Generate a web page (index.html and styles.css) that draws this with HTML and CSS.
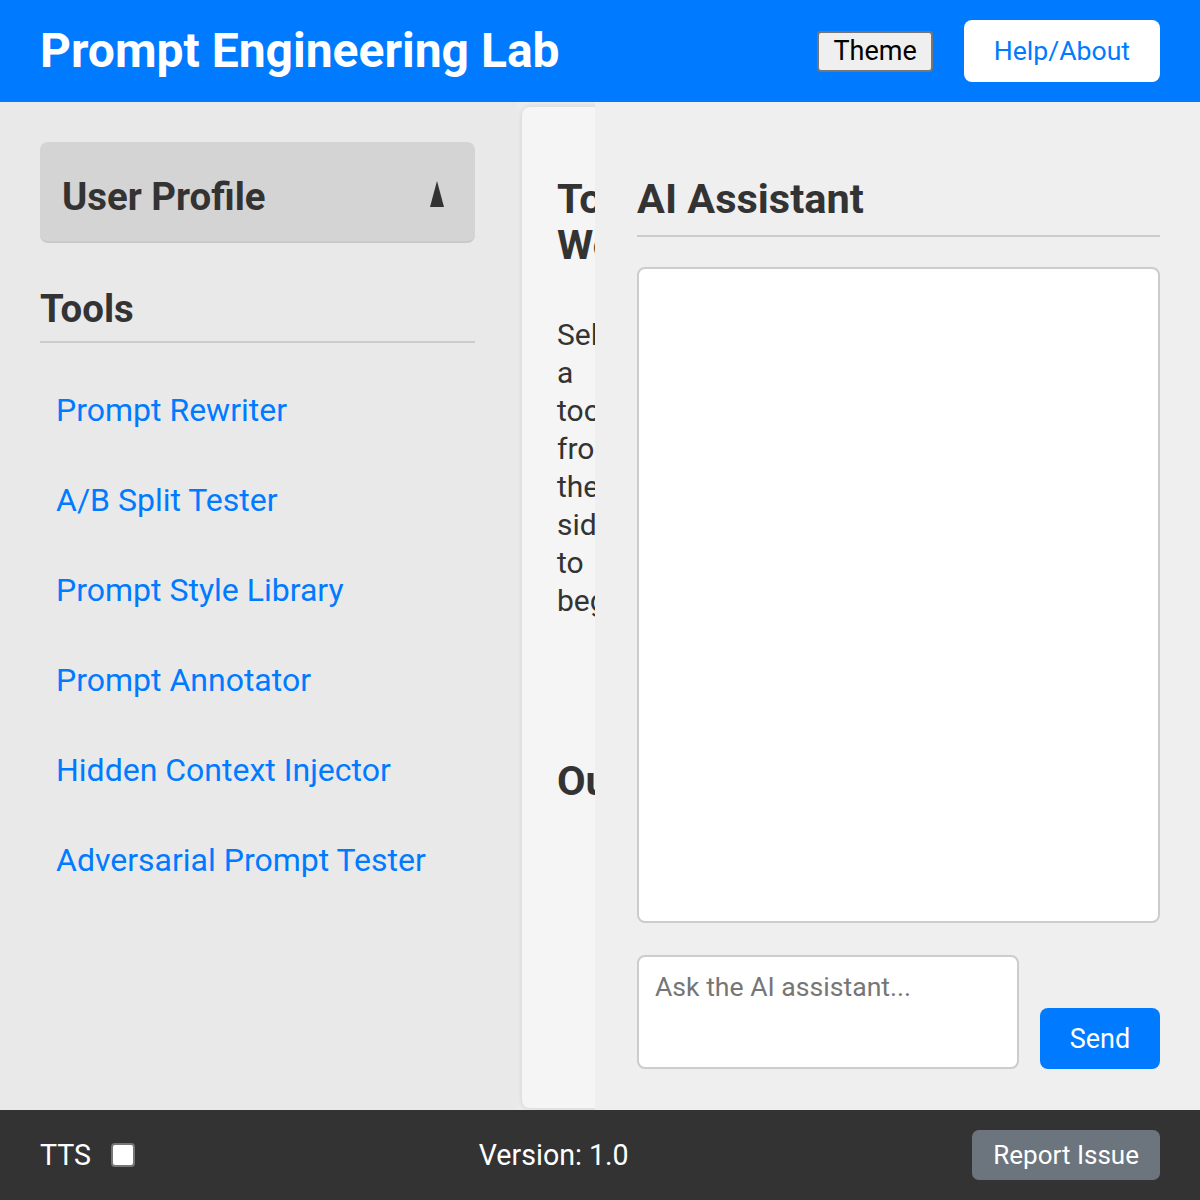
FILE: index.html
```html
<!DOCTYPE html>
<html lang="en">
<head>
<meta charset="utf-8">
<title>Prompt Engineering Lab</title>
<link rel="stylesheet" href="styles.css">
</head>
<body>
<div class="app">
  <header class="topbar">
    <h1 class="title">Prompt Engineering Lab</h1>
    <div class="top-actions">
      <button class="theme-btn">Theme</button>
      <button class="help-btn">Help/About</button>
    </div>
  </header>
  <div class="main">
    <aside class="sidebar">
      <div class="profile">
        <span class="profile-title">User Profile</span>
        <svg class="profile-arrow" width="14" height="26" viewBox="0 0 14 26"><polygon points="7,0 14,26 0,26" fill="#333"/></svg>
      </div>
      <h2 class="section-title tools-title">Tools</h2>
      <ul class="tool-list">
        <li><a href="#">Prompt Rewriter</a></li>
        <li><a href="#">A/B Split Tester</a></li>
        <li><a href="#">Prompt Style Library</a></li>
        <li><a href="#">Prompt Annotator</a></li>
        <li><a href="#">Hidden Context Injector</a></li>
        <li><a href="#">Adversarial Prompt Tester</a></li>
      </ul>
    </aside>
    <section class="workspace">
      <div class="work-card">
        <h2 class="section-title big-title work-title">Tool Workspace</h2>
        <p class="work-text">Select a tool from the sidebar to begin.</p>
        <h2 class="section-title big-title output-title">Output</h2>
      </div>
    </section>
    <section class="assistant">
      <h2 class="section-title big-title assistant-title">AI Assistant</h2>
      <div class="chat-log"></div>
      <div class="chat-input-row">
        <textarea class="chat-input" placeholder="Ask the AI assistant..."></textarea>
        <button class="send-btn">Send</button>
      </div>
    </section>
  </div>
  <footer class="footer">
    <label class="tts"><span>TTS</span><span class="checkbox"></span></label>
    <span class="version">Version: 1.0</span>
    <button class="report-btn">Report Issue</button>
  </footer>
</div>
</body>
</html>
```

FILE: styles.css
```css
* { box-sizing: border-box; }
html, body { margin: 0; padding: 0; }
body {
  font-family: Roboto, "Liberation Sans", sans-serif;
  color: #333;
  width: 1200px;
  height: 1200px;
  overflow: hidden;
}
.app {
  display: flex;
  flex-direction: column;
  height: 1200px;
}
.topbar {
  height: 102px;
  background: #007bff;
  display: flex;
  align-items: center;
  justify-content: space-between;
  padding: 0 40px;
  flex-shrink: 0;
}
.title {
  margin: 0;
  color: #fff;
  font-size: 48px;
  font-weight: 700;
  line-height: 56px;
}
.top-actions {
  display: flex;
  align-items: center;
  gap: 31px;
}
.theme-btn {
  font-family: Roboto, "Liberation Sans", sans-serif;
  font-size: 27px;
  line-height: 31px;
  color: #000;
  background: #efefef;
  border: 2px solid #767676;
  border-radius: 4px;
  padding: 3px 14px;
}
.help-btn {
  font-family: Roboto, "Liberation Sans", sans-serif;
  font-size: 26.6px;
  line-height: 32px;
  color: #007bff;
  background: #fff;
  border: none;
  border-radius: 8px;
  padding: 15px 30px;
}
.main {
  flex: 1;
  display: flex;
  min-height: 0;
}
.sidebar {
  width: 517px;
  flex-shrink: 0;
  background: #e9e9e9;
  padding: 40px 42px 40px 40px;
}
.profile {
  display: flex;
  align-items: center;
  justify-content: space-between;
  background: #d4d4d4;
  border-radius: 8px;
  border-bottom: 2px solid #c9c9c9;
  padding: 34px 31px 24px 22px;
}
.profile-title {
  font-size: 38.4px;
  font-weight: 700;
  line-height: 41px;
}
.profile-arrow { display: block; margin-top: -6px; }
.section-title {
  font-size: 38.4px;
  font-weight: 700;
  line-height: 46px;
  color: #333;
}
.big-title {
  font-size: 41.5px;
}
.tools-title {
  margin: 43px 0 0;
  padding-bottom: 9px;
  border-bottom: 2px solid #ccc;
}
.tool-list {
  list-style: none;
  margin: 22px 0 0;
  padding: 0;
}
.tool-list li {
  padding: 28px 16px;
}
.tool-list a {
  color: #007bff;
  text-decoration: none;
  font-size: 32px;
  line-height: 34px;
  display: block;
  white-space: nowrap;
}
.workspace {
  flex: 1;
  min-width: 0;
  overflow: hidden;
  background: #ececec;
  padding: 5px 0 2px 5px;
  display: flex;
}
.work-card {
  width: 110px;
  flex-shrink: 0;
  background: #f5f5f5;
  border-radius: 8px;
  box-shadow: 0 0 6px rgba(0, 0, 0, 0.12);
  padding: 35px 35px 0;
}
.work-title {
  margin: 34px 0 0;
}
.work-text {
  margin: 48px 0 0;
  font-size: 30px;
  line-height: 38px;
  color: #333;
}
.output-title {
  margin: 138px 0 0;
}
.assistant {
  width: 605px;
  flex-shrink: 0;
  background: #efefef;
  padding: 40px 40px 41px 42px;
  display: flex;
  flex-direction: column;
}
.assistant-title {
  margin: 34px 0 30px;
  padding-bottom: 13px;
  border-bottom: 2px solid #ccc;
}
.chat-log {
  flex: 1;
  background: #fff;
  border: 2px solid #ccc;
  border-radius: 8px;
}
.chat-input-row {
  margin-top: 32px;
  display: flex;
  align-items: flex-end;
  gap: 21px;
}
.chat-input {
  flex: 1;
  height: 114px;
  resize: none;
  border: 2px solid #ccc;
  border-radius: 8px;
  background: #fff;
  padding: 14px 16px;
  font-family: Roboto, "Liberation Sans", sans-serif;
  font-size: 26.6px;
  line-height: 32px;
  color: #333;
}
.chat-input::placeholder { color: #767676; }
.send-btn {
  width: 120px;
  height: 61px;
  border: none;
  border-radius: 8px;
  background: #007bff;
  color: #fff;
  font-family: Roboto, "Liberation Sans", sans-serif;
  font-size: 27px;
}
.footer {
  height: 90px;
  flex-shrink: 0;
  background: #333;
  color: #fff;
  display: flex;
  align-items: center;
  justify-content: space-between;
  padding: 0 40px;
  font-size: 28.6px;
}
.tts {
  display: flex;
  align-items: center;
  gap: 20px;
}
.checkbox {
  width: 24px;
  height: 24px;
  background: #fff;
  border: 2px solid #767676;
  border-radius: 4px;
  display: inline-block;
}
.report-btn {
  font-family: Roboto, "Liberation Sans", sans-serif;
  font-size: 26px;
  line-height: 30px;
  color: #fff;
  background: #6c757d;
  border: none;
  border-radius: 7px;
  padding: 10px 21px;
}
```
